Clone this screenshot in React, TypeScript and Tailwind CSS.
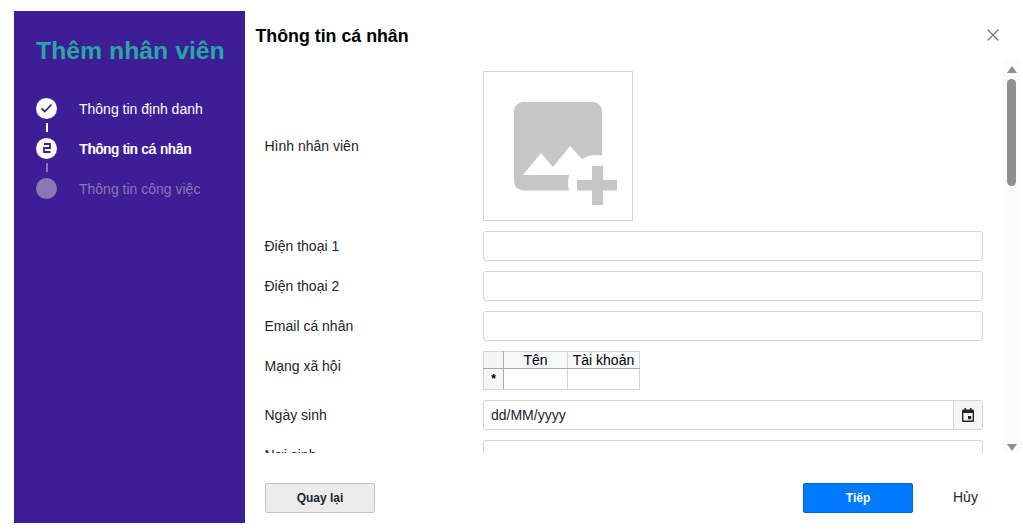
import { X } from "lucide-react";

function StepDot({ state, label }: { state: "done" | "active" | "todo"; label: string }) {
  return (
    <div className="flex h-5 items-center">
      <div className={`mb-[2px] flex h-[21px] w-[21px] shrink-0 items-center justify-center rounded-full ${state === "todo" ? "bg-[#8a77b4]" : "bg-white"}`}>
        {state === "done" && (
          <svg width="13" height="11" viewBox="0 0 13 11" fill="none">
            <path d="M1.5 5.5 L4.8 8.5 L11.5 1.5" stroke="#3d1f94" strokeWidth="1.8" />
          </svg>
        )}
        {state === "active" && (
          <svg width="8" height="10" viewBox="0 0 8 10" fill="none">
            <path d="M1 1 H7 V5 H1 V9 H7.5" stroke="#3d1f94" strokeWidth="1.8" />
          </svg>
        )}
      </div>
      <span
        className={`ml-[22px] text-[14px] ${
          state === "done"
            ? "text-white"
            : state === "active"
              ? "text-white [text-shadow:0.6px_0_0_#fff]"
              : "text-[#8a77b4]"
        }`}
      >
        {label}
      </span>
    </div>
  );
}

function Sidebar() {
  return (
    <aside className="h-[512px] w-[231px] shrink-0 bg-[#3e1e96] pl-[22px]">
      <h1 className="mt-[24px] text-[24.8px] leading-[32px] font-bold whitespace-nowrap text-[#26a8a4]">Thêm nhân viên</h1>
      <div className="mt-[32px]">
        <StepDot state="done" label="Thông tin định danh" />
        <div className="mt-[4px] mb-[7px] ml-[9.5px] h-[9px] w-[2px] bg-white" />
        <StepDot state="active" label="Thông tin cá nhân" />
        <div className="mt-[4px] mb-[7px] ml-[9.5px] h-[9px] w-[2px] bg-[#8a77b4]" />
        <StepDot state="todo" label="Thông tin công việc" />
      </div>
    </aside>
  );
}

function FormRow({ label, top, children }: { label: string; top?: boolean; children: React.ReactNode }) {
  return (
    <div className={`flex ${top ? "items-start" : "items-center"}`}>
      <label className={`w-[218.5px] shrink-0 text-[14px] text-[#212529] ${top ? "pt-[5px]" : ""}`}>{label}</label>
      {children}
    </div>
  );
}

function TextInput() {
  return <div className="h-[30px] w-[500px] rounded-[3px] border border-[#d5d5d5] bg-white" />;
}

function ImagePlaceholder() {
  return (
    <div className="h-[150px] w-[150px] border border-[#d5d5d5] bg-white">
      <svg width="148" height="148" viewBox="1 1 148 148">
        <rect x="31" y="31" width="88" height="88.5" rx="9" fill="#c6c6c6" />
        <path d="M40 104 L58 82 L70 96 L87 75 L99 88 L99 104 Z" fill="#fff" />
        <circle cx="113" cy="112" r="28" fill="#fff" />
        <path d="M109 95 H120 V109 H134 V119.5 H120 V134 H109 V119.5 H94 V109 H109 Z" fill="#c6c6c6" />
      </svg>
    </div>
  );
}

function SocialGrid() {
  return (
    <table className="border-collapse text-[14px] leading-[16px] text-black">
      <tbody>
        <tr className="h-[17px]">
          <td className="w-[20px] border border-[#d5d5d5] border-r-[#a9a9a9] border-b-[#a9a9a9] bg-[#f5f5f5] p-0" />
          <td className="w-[64px] border border-[#d5d5d5] border-b-[#a9a9a9] bg-[#f8f9fa] p-0 text-center">Tên</td>
          <td className="w-[72px] border border-[#d5d5d5] border-b-[#a9a9a9] bg-[#f8f9fa] p-0 text-center">Tài khoản</td>
        </tr>
        <tr className="h-[21px]">
          <td className="border border-[#d5d5d5] border-r-[#a9a9a9] bg-[#f5f5f5] p-0 text-center text-[12px] font-bold">*</td>
          <td className="border border-[#d5d5d5] p-0" />
          <td className="border border-[#d5d5d5] p-0" />
        </tr>
      </tbody>
    </table>
  );
}

function DateInput() {
  return (
    <div className="flex h-[30px] w-[500px] items-stretch rounded-[3px] border border-[#d5d5d5] bg-white">
      <span className="flex-1 pl-[7px] text-[14px] leading-[28px] text-[#212529]">dd/MM/yyyy</span>
      <div className="flex w-[29px] items-center justify-center rounded-r-[3px] border-l border-[#d5d5d5] bg-[#f5f5f5]">
        <svg width="12" height="14" viewBox="0 0 12 14">
          <path
            fillRule="evenodd"
            d="M2.5 0h1.5v1.5h4V0h1.5v1.5h1.2c.7 0 1.3.6 1.3 1.3v9.9c0 .7-.6 1.3-1.3 1.3H1.3C.6 14 0 13.4 0 12.7V2.8c0-.7.6-1.3 1.3-1.3h1.2V0ZM1.4 5v7.6h9.2V5H1.4Z"
            fill="#212529"
          />
          <rect x="6" y="8" width="3.2" height="3.2" fill="#212529" />
        </svg>
      </div>
    </div>
  );
}

function Scrollbar() {
  return (
    <div className="flex w-[17px] shrink-0 flex-col items-center bg-[#fbfbfb]">
      <div className="mt-[5px] h-0 w-0 border-x-[5px] border-b-[7px] border-x-transparent border-b-[#8f8f8f]" />
      <div className="mt-[6px] h-[107px] w-[9px] rounded-full bg-[#8f8f8f]" />
      <div className="mt-auto mb-[2px] h-0 w-0 border-x-[5px] border-t-[7px] border-x-transparent border-t-[#8f8f8f]" />
    </div>
  );
}

export default function App() {
  return (
    <div className="flex h-[529px] w-[1023px] overflow-hidden bg-white pt-[11px] pl-[14px] font-['Liberation_Sans',Arial,sans-serif]">
      <Sidebar />
      <main className="flex h-[512px] flex-1 flex-col">
        <header className="flex h-[50px] items-center justify-between pr-[20px] pl-[10.5px]">
          <h2 className="text-[17.8px] font-bold text-black">Thông tin cá nhân</h2>
          <X size={20} strokeWidth={1.5} className="-mt-[2px] text-[#777]" />
        </header>
        <div className="flex h-[392px] overflow-hidden">
          <div className="flex w-[758px] flex-col gap-[10px] overflow-hidden pt-[10px] pl-[19.5px]">
            <FormRow label="Hình nhân viên">
              <ImagePlaceholder />
            </FormRow>
            <FormRow label="Điện thoại 1">
              <TextInput />
            </FormRow>
            <FormRow label="Điện thoại 2">
              <TextInput />
            </FormRow>
            <FormRow label="Email cá nhân">
              <TextInput />
            </FormRow>
            <FormRow label="Mạng xã hội" top>
              <SocialGrid />
            </FormRow>
            <FormRow label="Ngày sinh">
              <DateInput />
            </FormRow>
            <FormRow label="Nơi sinh">
              <TextInput />
            </FormRow>
          </div>
          <Scrollbar />
        </div>
        <footer className="flex flex-1 items-start pt-[30px] pl-5">
          <button className="h-[30px] w-[110px] rounded-[2px] border border-[#c4c4c4] bg-[#ececec] text-[12px] font-bold text-[#212529]">
            Quay lại
          </button>
          <button className="ml-[428px] h-[30px] w-[110px] rounded-[2px] border border-[#0062cc] bg-[#007bff] text-[12px] font-bold text-white">
            Tiếp
          </button>
          <span className="ml-10 text-[14px] leading-[28px] text-[#212529]">Hủy</span>
        </footer>
      </main>
    </div>
  );
}
